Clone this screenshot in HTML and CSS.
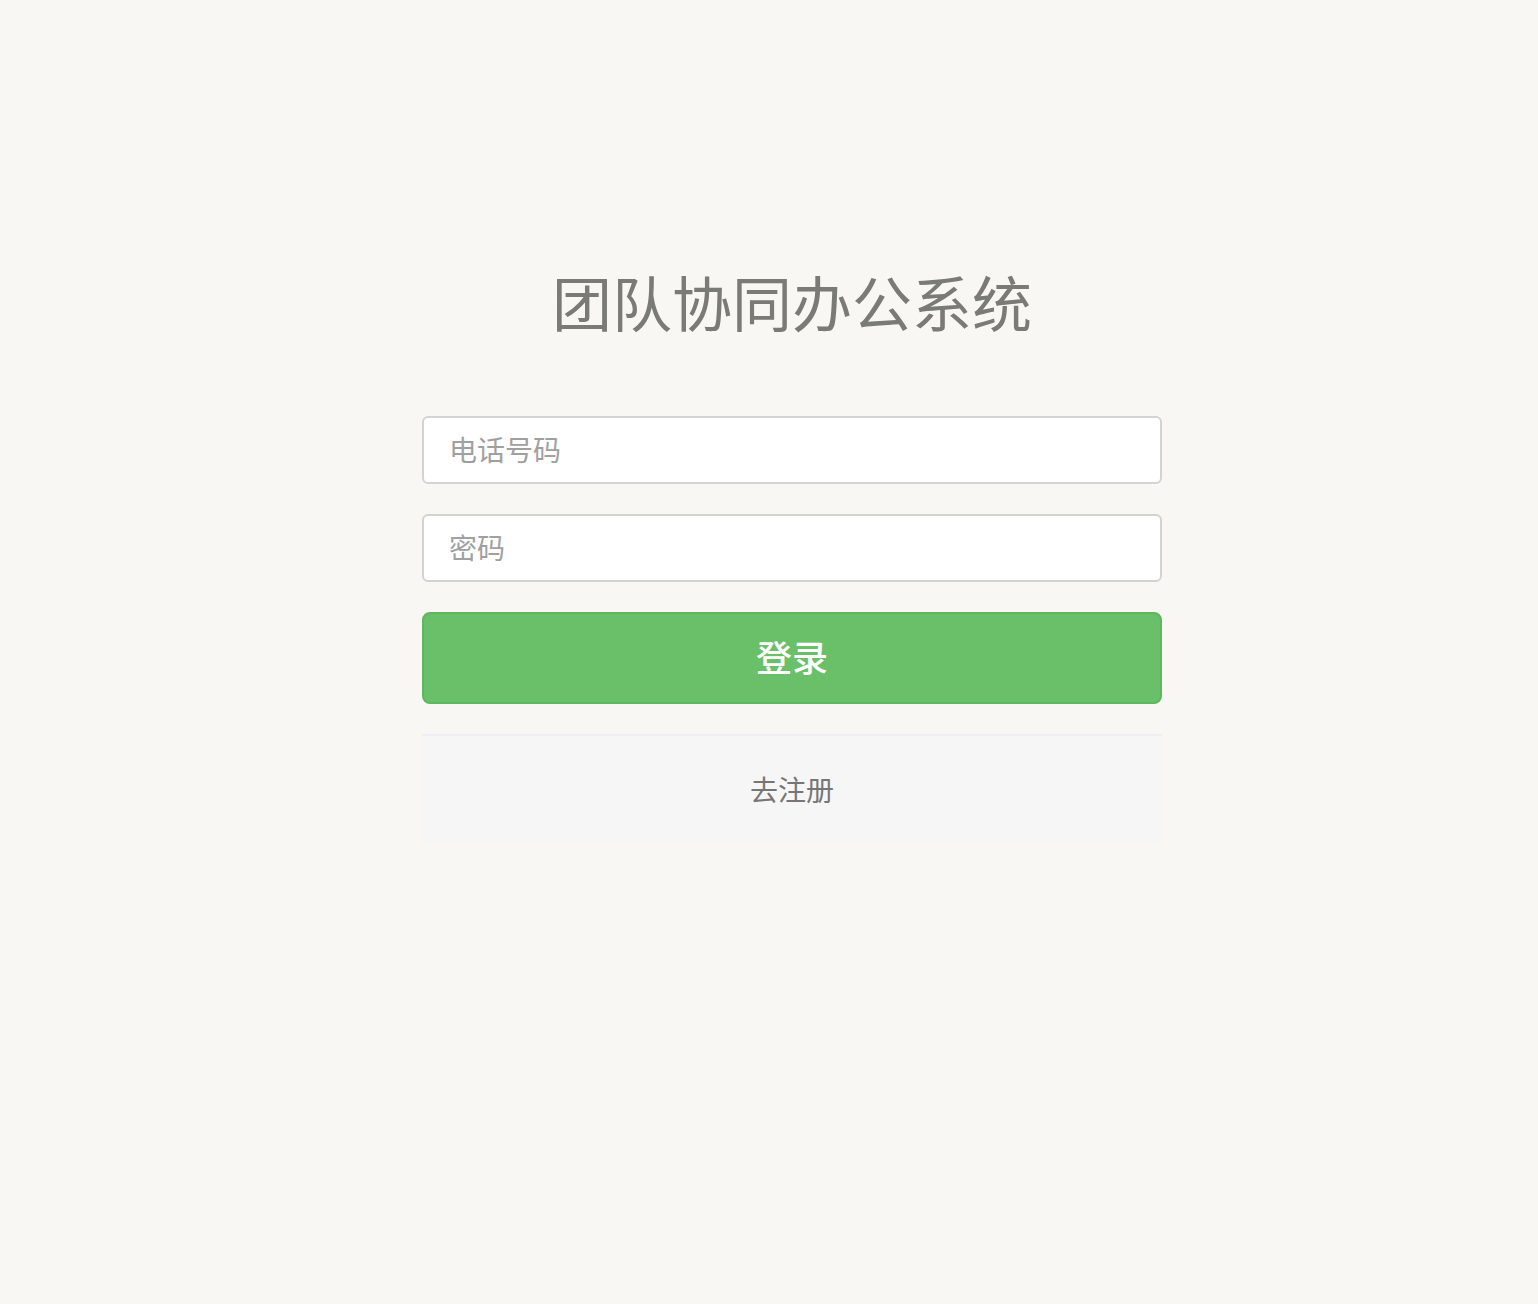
FILE: index.html
```
<!DOCTYPE html>
<html>
<head>
<meta charset="UTF-8">
<title>团队协同办公系统</title>
<link rel="stylesheet" href="styles.css">
</head>
<body>
<div class="wrap">
<h1 class="title">团队协同办公系统</h1>
<form action="#" class="form" id="login">
<div class="item">
<input type="text" name="tel" class="text" placeholder="电话号码">
</div>
<div class="item">
<input type="password" name="psw" class="text" placeholder="密码">
</div>
<div class="btn">
<input type="submit" value="登录">
</div>
</form>
<div class="footer">
<a href="#" class="link">去注册</a>
</div>
</div>
</body>
</html>
```

FILE: styles.css
```
html,body{
margin:0px;
padding:0px;
}
body{
background:#f8f7f4;
font-family:"Noto Sans CJK SC","Noto Sans",sans-serif;
padding-left:46px;
}
input{
outline:none;
font-family:"Noto Sans CJK SC","Noto Sans",sans-serif;
}
.wrap{
width:740px;
margin:0 auto;
padding-top:259px;
}
.title{
margin:0px;
height:84px;
line-height:84px;
text-align:center;
font-size:60px;
font-weight:normal;
color:#7a7a76;
}
.form{
margin:0px;
padding-top:73px;
}
.item{
margin-bottom:30px;
}
.item .text{
display:block;
box-sizing:border-box;
width:740px;
height:68px;
padding:0 25px 2px;
border:2px solid #d3d3d3;
border-radius:6px;
background:#fff;
font-size:28px;
color:#555;
}
.item .text::placeholder{
color:#a0a0a0;
}
.btn input{
display:block;
box-sizing:border-box;
width:740px;
height:92px;
padding-bottom:6px;
border:2px solid #5cb85c;
border-radius:8px;
background:#6abf69;
color:#fff;
font-size:36px;
font-weight:500;
cursor:pointer;
}
.footer{
margin-top:30px;
height:108px;
line-height:106px;
border-top:2px solid #eeeff3;
background:#f6f6f6;
text-align:center;
}
.link{
font-size:28px;
color:#767676;
text-decoration:none;
}
```
